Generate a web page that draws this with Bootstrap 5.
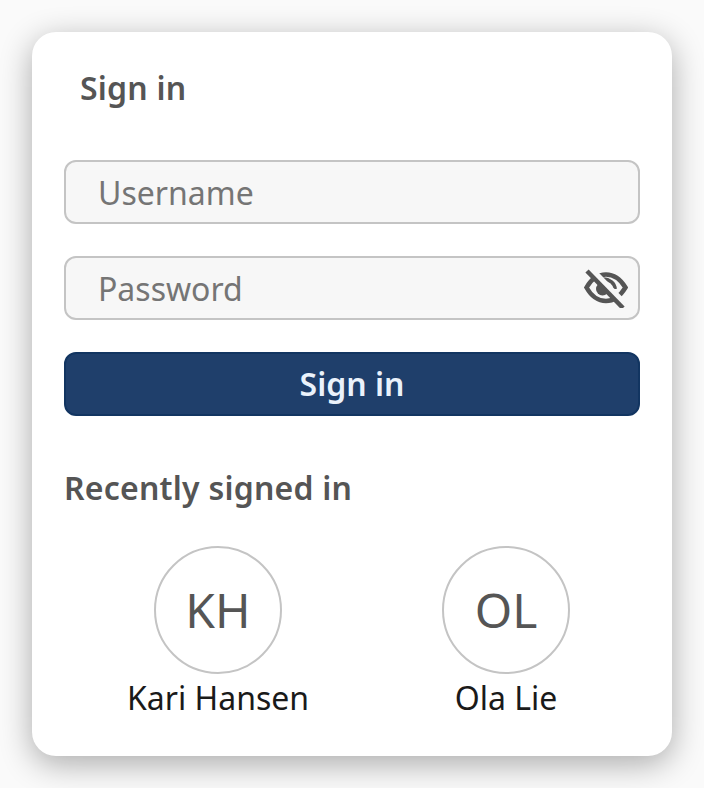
<!doctype html>
<html lang="en">
<head>
<meta charset="utf-8">
<title>Sign in</title>
<link rel="stylesheet" href="https://cdn.jsdelivr.net/npm/bootstrap@5.3.0/dist/css/bootstrap.min.css">
<style>
html, body { height: 100%; }
body { background: #fafafa; font-family: "Noto Sans", sans-serif; padding: 32px; overflow: hidden; }
.login-panel { width: 640px; height: 724px; padding: 0 32px; background: #fff; border: 0; border-radius: 24px; box-shadow: 0 8px 32px rgba(0,0,0,.32); }
.panel-title { margin: 0; padding: 32px 0 0 16px; height: 128px; font-size: 32px; line-height: 48px; font-weight: 600; letter-spacing: .22px; color: #555; }
.field-wrap { height: 64px; margin-bottom: 32px; }
.field-input { height: 64px; padding: 0 32px; font-family: inherit; font-size: 32px; color: #555; background: #f7f7f7; border: 2px solid #c4c4c4; border-radius: 12px; }
.field-input::placeholder { color: #757575; opacity: 1; }
.field-input:focus { background: #f7f7f7; }
.eye-toggle { right: 12px; top: 12px; width: 44px; height: 40px; padding: 0; border: 0; background: transparent; line-height: 0; }
.submit-btn { height: 64px; padding: 0; font-size: 32px; font-weight: 600; line-height: 60px; color: #eaf2fb; background: #1f3f6b; border: 2px solid #123561; border-radius: 12px; }
.recent-title { margin: 0; padding-top: 48px; height: 130px; font-size: 32px; line-height: 48px; font-weight: 600; letter-spacing: .22px; color: #555; }
.recent-row { padding-left: 10px; width: 596px; }
.person-col { width: 288px; }
.person-circle { width: 128px; height: 128px; border: 2px solid #c4c4c4; border-radius: 50%; font-size: 48px; color: #555; }
.person-name { font-size: 32px; line-height: 48px; color: #1a1a1a; }
</style>
</head>
<body>
<main class="card login-panel">
  <h1 class="panel-title">Sign in</h1>
  <form>
    <div class="position-relative field-wrap">
      <input class="form-control field-input" type="text" placeholder="Username" aria-label="Username">
    </div>
    <div class="position-relative field-wrap">
      <input class="form-control field-input" type="password" placeholder="Password" aria-label="Password">
      <button type="button" class="position-absolute eye-toggle" aria-label="Show password">
        <svg width="44" height="40" viewBox="0 0 44 40" fill="none" stroke="#555" stroke-width="4.500">
          <path d="M2.500 19.500C7.500 10.500 14.500 6.500 22 6.500s14 4 19.500 13C36 28.500 29.500 33 22 33S7.500 28.500 2.500 19.500Z"/>
          <path d="M19 11c6.500 0 12 4.500 12 10" stroke-width="3.500"/>
          <circle cx="18.500" cy="21" r="6.500" fill="#555" stroke="none"/>
          <path d="M6.500 0.500 43 38" stroke="#f7f7f7" stroke-width="6"/>
          <path d="M3 3 39 40" stroke-width="4.500"/>
        </svg>
      </button>
    </div>
    <button type="button" class="btn w-100 d-block submit-btn">Sign in</button>
  </form>
  <h2 class="recent-title">Recently signed in</h2>
  <div class="d-flex recent-row">
    <div class="d-flex flex-column align-items-center person-col">
      <div class="d-flex align-items-center justify-content-center person-circle">KH</div>
      <div class="person-name">Kari Hansen</div>
    </div>
    <div class="d-flex flex-column align-items-center person-col">
      <div class="d-flex align-items-center justify-content-center person-circle">OL</div>
      <div class="person-name">Ola Lie</div>
    </div>
  </div>
</main>
<script src="https://cdn.jsdelivr.net/npm/bootstrap@5.3.0/dist/js/bootstrap.bundle.min.js"></script>
</body>
</html>
